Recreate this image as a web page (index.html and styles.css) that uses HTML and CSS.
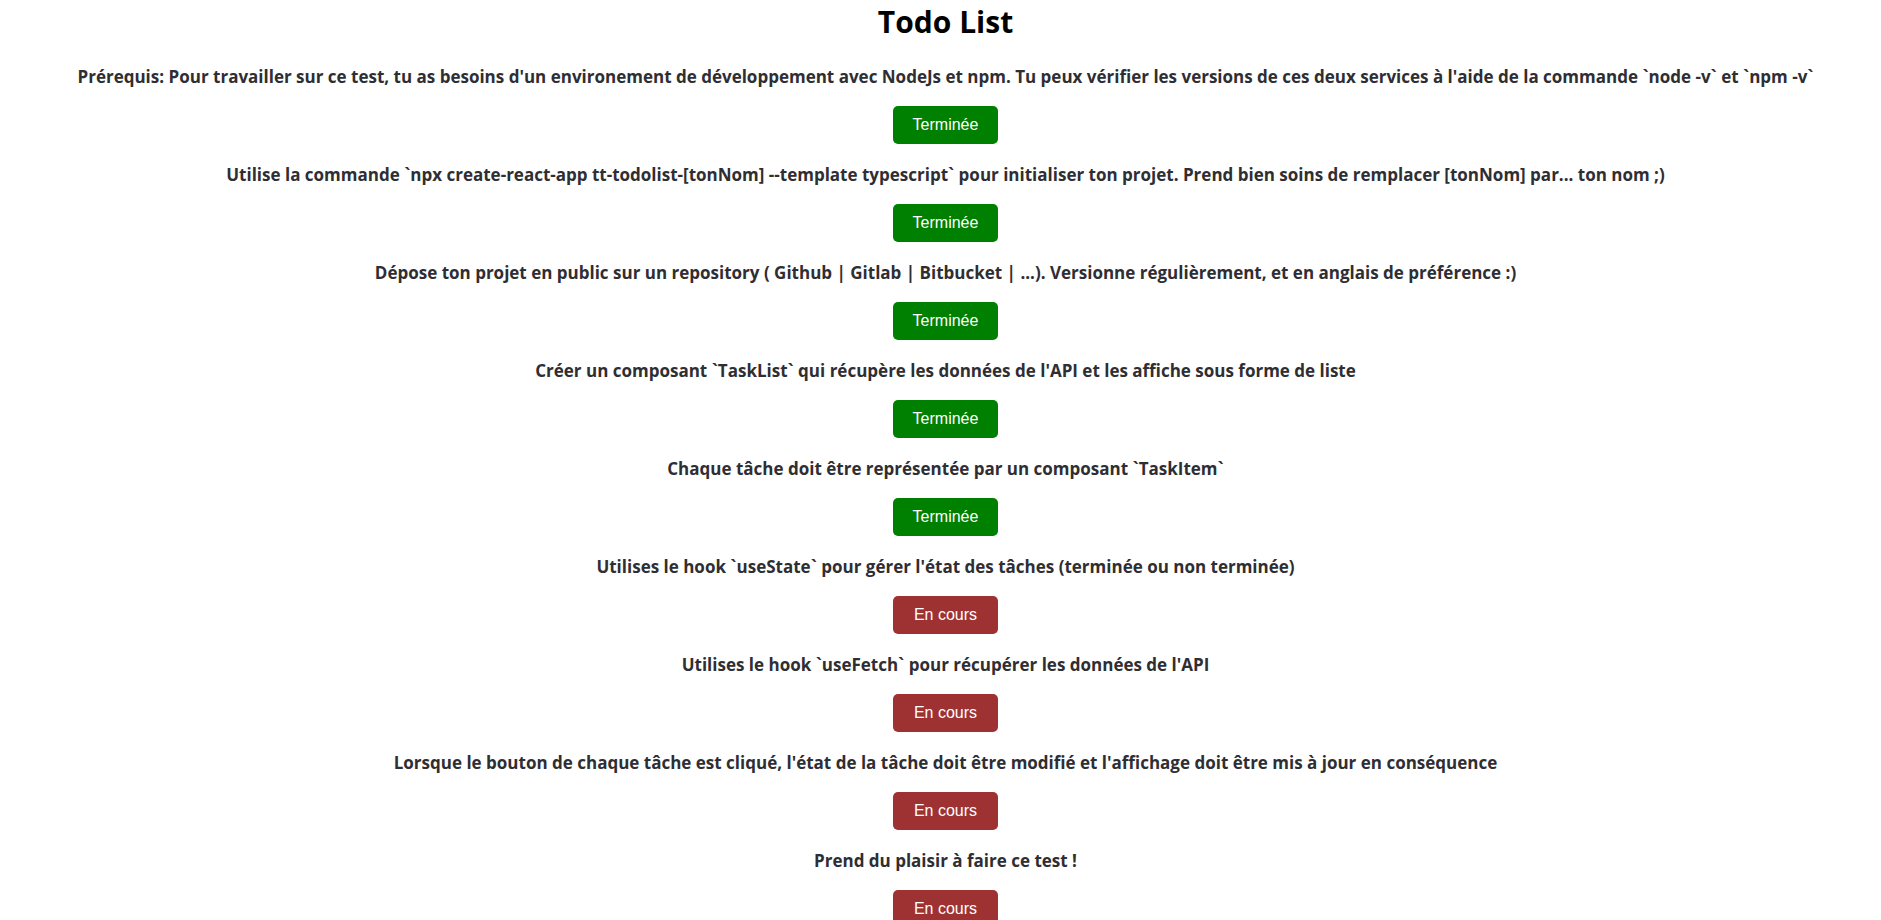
FILE: index.html
```html
<!DOCTYPE html>
<html lang="fr">
<head>
<meta charset="utf-8">
<title>Todo List</title>
<link rel="stylesheet" href="styles.css">
</head>
<body>
<div class="app">
  <h1 class="title">Todo List</h1>
  <ul class="task-list">
    <li class="task">
      <p class="task-text">Prérequis: Pour travailler sur ce test, tu as besoins d'un environement de développement avec NodeJs et npm. Tu peux vérifier les versions de ces deux services à l'aide de la commande `node -v` et `npm -v`</p>
      <button class="task-btn done">Terminée</button>
    </li>
    <li class="task">
      <p class="task-text">Utilise la commande `npx create-react-app tt-todolist-[tonNom] --template typescript` pour initialiser ton projet. Prend bien soins de remplacer [tonNom] par... ton nom ;)</p>
      <button class="task-btn done">Terminée</button>
    </li>
    <li class="task">
      <p class="task-text">Dépose ton projet en public sur un repository ( Github | Gitlab | Bitbucket | ...). Versionne régulièrement, et en anglais de préférence :)</p>
      <button class="task-btn done">Terminée</button>
    </li>
    <li class="task">
      <p class="task-text">Créer un composant `TaskList` qui récupère les données de l'API et les affiche sous forme de liste</p>
      <button class="task-btn done">Terminée</button>
    </li>
    <li class="task">
      <p class="task-text">Chaque tâche doit être représentée par un composant `TaskItem`</p>
      <button class="task-btn done">Terminée</button>
    </li>
    <li class="task">
      <p class="task-text">Utilises le hook `useState` pour gérer l'état des tâches (terminée ou non terminée)</p>
      <button class="task-btn pending">En cours</button>
    </li>
    <li class="task">
      <p class="task-text">Utilises le hook `useFetch` pour récupérer les données de l'API</p>
      <button class="task-btn pending">En cours</button>
    </li>
    <li class="task">
      <p class="task-text">Lorsque le bouton de chaque tâche est cliqué, l'état de la tâche doit être modifié et l'affichage doit être mis à jour en conséquence</p>
      <button class="task-btn pending">En cours</button>
    </li>
    <li class="task">
      <p class="task-text">Prend du plaisir à faire ce test !</p>
      <button class="task-btn pending">En cours</button>
    </li>
  </ul>
</div>
</body>
</html>
```

FILE: styles.css
```css
html, body {
  margin: 0;
  padding: 0;
  background: #ffffff;
}

.app {
  display: flex;
  flex-direction: column;
  align-items: center;
  padding-left: 10px;
  font-family: "Open Sans", "Noto Sans", sans-serif;
  text-align: center;
}

.title {
  margin: 0;
  height: 44px;
  line-height: 44px;
  font-size: 30px;
  font-weight: 700;
  color: #000;
}

.task-list {
  list-style: none;
  margin: 0;
  padding: 22px 0 0;
  display: flex;
  flex-direction: column;
  align-items: center;
  gap: 20px;
}

.task {
  display: flex;
  flex-direction: column;
  align-items: center;
  gap: 18px;
}

.task-text {
  margin: 0;
  font-size: 17px;
  line-height: 22px;
  font-weight: 700;
  color: #2e2e33;
  white-space: nowrap;
}

.task-btn {
  box-sizing: border-box;
  width: 105px;
  height: 38px;
  padding: 0;
  border: none;
  border-radius: 5px;
  font-family: "Liberation Sans", Arial, sans-serif;
  font-size: 16px;
  color: #fff;
  cursor: pointer;
}

.task-btn.done {
  background: #008000;
}

.task-btn.pending {
  background: #9e3232;
}
```
